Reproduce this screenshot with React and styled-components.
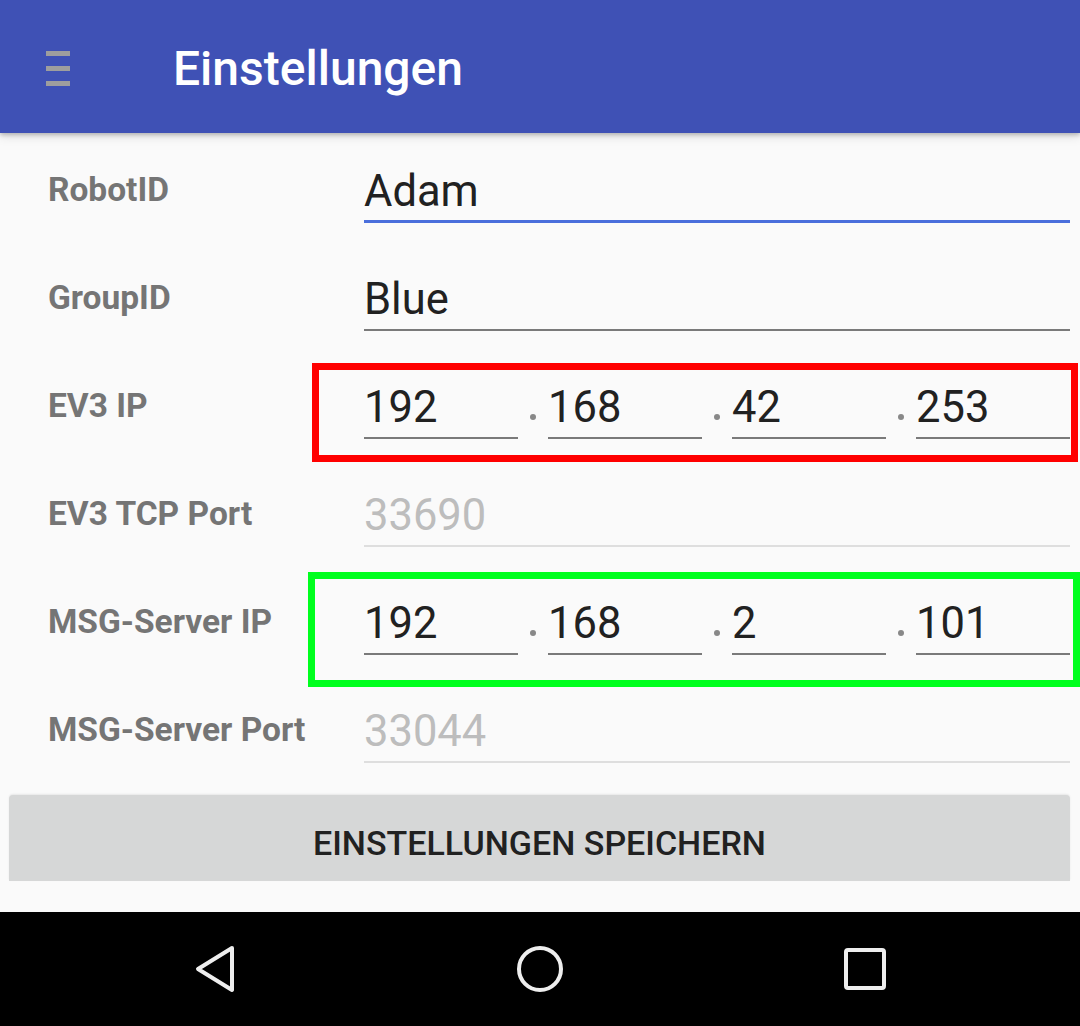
import React from 'react';
import styled, { createGlobalStyle } from 'styled-components';

const GlobalStyle = createGlobalStyle`
  html, body {
    margin: 0;
    padding: 0;
    background: #fafafa;
  }
  body {
    font-family: Roboto, "Noto Sans", sans-serif;
  }
`;

const Screen = styled.div`
  width: 1080px;
  height: 1026px;
  display: flex;
  flex-direction: column;
  background: #fafafa;
  overflow: hidden;
`;

const AppBar = styled.header`
  height: 133px;
  flex-shrink: 0;
  background: #3f51b5;
  display: flex;
  align-items: center;
  position: relative;
  z-index: 1;
  box-shadow: 0 2px 4px rgba(0, 0, 0, 0.22), 0 4px 10px rgba(0, 0, 0, 0.1);
`;

const MenuIcon = styled.div`
  width: 24px;
  height: 35px;
  margin: 4px 0 0 46px;
  display: flex;
  flex-direction: column;
  justify-content: space-between;

  span {
    display: block;
    height: 5px;
    background: #9e9e9e;
  }
`;

const Title = styled.h1`
  margin: 0 0 0 103px;
  color: #fff;
  font-size: 48px;
  font-weight: 500;
  line-height: 1;
  padding-top: 5px;
`;

const Content = styled.main`
  flex: 1;
  display: flex;
  flex-direction: column;
`;

const Row = styled.div`
  height: 108px;
  display: grid;
  grid-template-columns: 316px 1fr;
  padding: 0 10px 0 48px;
  position: relative;
`;

const Label = styled.div`
  padding-top: 40px;
  font-size: 33.5px;
  font-weight: 700;
  line-height: 1;
  color: #757575;
  white-space: nowrap;
`;

const Field = styled.div`
  height: 90px;
  box-sizing: border-box;
  display: flex;
  align-items: flex-end;
  padding-bottom: ${({ focused }) => (focused ? 7 : 8)}px;
  border-bottom: ${({ focused, disabled }) =>
    focused ? '3px solid #4a6fdc' : disabled ? '2px solid #dedede' : '2px solid #7a7a7a'};
  font-size: 43.5px;
  line-height: 1;
  color: ${({ disabled }) => (disabled ? '#bdbdbd' : '#212121')};
`;

const IpGroup = styled.div`
  display: grid;
  grid-template-columns: 154px 30px 154px 30px 154px 30px 154px;
`;

const Dot = styled.div`
  height: 90px;
  display: flex;
  align-items: flex-end;
  justify-content: center;
  padding-bottom: 19px;
  box-sizing: border-box;

  &::before {
    content: '';
    width: 6px;
    height: 6px;
    border-radius: 50%;
    background: #888;
  }
`;

const Highlight = styled.div`
  position: absolute;
  left: ${({ left }) => left}px;
  right: ${({ right }) => right}px;
  top: ${({ top }) => top}px;
  bottom: ${({ bottom }) => bottom}px;
  border: 7px solid ${({ color }) => color};
  pointer-events: none;
`;

const SaveButton = styled.button`
  margin: 14px 10px 0 9px;
  height: 86px;
  border: none;
  border-radius: 4px 4px 0 0;
  background: #d6d7d7;
  box-shadow: 0 -1px 2px rgba(0, 0, 0, 0.08);
  font-family: Roboto, "Noto Sans", sans-serif;
  font-size: 34px;
  font-weight: 500;
  color: #212121;
  padding: 10px 0 0;
  line-height: 1;
`;

const NavBar = styled.nav`
  height: 114px;
  flex-shrink: 0;
  background: #000;
  display: grid;
  grid-template-columns: repeat(3, 1fr);
  align-items: center;
  justify-items: center;
  padding: 0 52px;

  svg {
    display: block;
  }
`;

const IpField = ({ parts }) => (
  <IpGroup>
    {parts.map((p, i) => (
      <React.Fragment key={i}>
        {i > 0 && <Dot />}
        <Field>{p}</Field>
      </React.Fragment>
    ))}
  </IpGroup>
);

export default function App() {
  return (
    <Screen>
      <GlobalStyle />
      <AppBar>
        <MenuIcon>
          <span />
          <span />
          <span />
        </MenuIcon>
        <Title>Einstellungen</Title>
      </AppBar>
      <Content>
        <Row>
          <Label>RobotID</Label>
          <Field focused>Adam</Field>
        </Row>
        <Row>
          <Label>GroupID</Label>
          <Field>Blue</Field>
        </Row>
        <Row>
          <Label>EV3 IP</Label>
          <IpField parts={['192', '168', '42', '253']} />
          <Highlight color="#ff0000" left={312} right={2} top={14} bottom={-5} />
        </Row>
        <Row>
          <Label>EV3 TCP Port</Label>
          <Field disabled>33690</Field>
        </Row>
        <Row>
          <Label>MSG-Server IP</Label>
          <IpField parts={['192', '168', '2', '101']} />
          <Highlight color="#00ff1e" left={308} right={0} top={7} bottom={-14} />
        </Row>
        <Row>
          <Label>MSG-Server Port</Label>
          <Field disabled>33044</Field>
        </Row>
        <SaveButton>EINSTELLUNGEN SPEICHERN</SaveButton>
      </Content>
      <NavBar>
        <svg width="46" height="50" viewBox="0 0 46 50">
          <path d="M40 4 L6 25 L40 46 Z" fill="none" stroke="#eee" strokeWidth="4" strokeLinejoin="round" />
        </svg>
        <svg width="50" height="50" viewBox="0 0 50 50">
          <circle cx="25" cy="25" r="21" fill="none" stroke="#eee" strokeWidth="4" />
        </svg>
        <svg width="46" height="46" viewBox="0 0 46 46">
          <rect x="4" y="4" width="38" height="38" rx="2" fill="none" stroke="#eee" strokeWidth="4" />
        </svg>
      </NavBar>
    </Screen>
  );
}
